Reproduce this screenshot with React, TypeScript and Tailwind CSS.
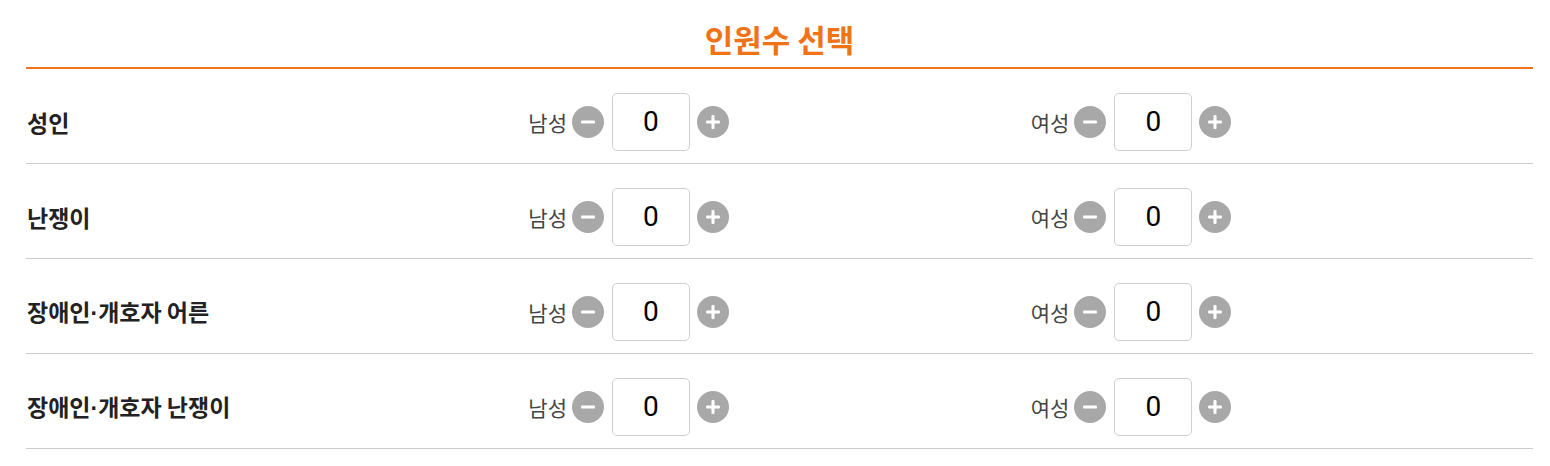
import React from "react";

const font = { fontFamily: '"Noto Sans CJK KR", "Noto Sans", sans-serif' };

function MinusIcon() {
  return (
    <svg width="32" height="32" viewBox="0 0 32 32" className="block">
      <circle cx="16" cy="16" r="16" fill="#a8a8a8" />
      <rect x="9" y="14.5" width="14" height="3" rx="1" fill="#ffffff" />
    </svg>
  );
}

function PlusIcon() {
  return (
    <svg width="32" height="32" viewBox="0 0 32 32" className="block">
      <circle cx="16" cy="16" r="16" fill="#a8a8a8" />
      <rect x="9" y="14.5" width="14" height="3" rx="1" fill="#ffffff" />
      <rect x="14.5" y="9" width="3" height="14" rx="1" fill="#ffffff" />
    </svg>
  );
}

function Counter({ label }: { label: string }) {
  return (
    <div className="flex items-center h-[58px]">
      <span className="text-[21px] text-[#444] leading-none">{label}</span>
      <button className="ml-[5px] w-[32px] h-[32px] p-0">
        <MinusIcon />
      </button>
      <div
        className="ml-[8px] w-[78px] h-[58px] border border-[#cfcfcf] rounded-[5px] bg-white flex items-center justify-center text-[28px] text-black"
        style={{ fontFamily: 'Roboto, "Liberation Sans", sans-serif' }}
      >
        0
      </div>
      <button className="ml-[7px] w-[32px] h-[32px] p-0">
        <PlusIcon />
      </button>
    </div>
  );
}

const rows: [string, string][] = [
  ["성인", ""],
  ["난쟁이", ""],
  ["장애인", "개호자 어른"],
  ["장애인", "개호자 난쟁이"],
];

export default function App() {
  return (
    <div className="bg-white w-[1550px] h-[466px]" style={font}>
      <div className="ml-[26px] w-[1507px]">
        <div className="h-[69px] border-b-2 border-[#f07320] flex items-center justify-center pt-[10px]">
          <h2 className="text-[31px] font-bold text-[#f07318] leading-none">인원수 선택</h2>
        </div>
        {rows.map(([a, b]) => (
          <div key={a + b} className="h-[95px] border-b border-[#cccccc] pt-[24px] grid grid-cols-3">
            <div className="flex items-center h-[58px] text-[23px] font-bold text-[#222] pl-[1px]">
              <span>
                {a}
                {b && (
                  <>
                    <span style={{ fontFamily: '"Liberation Sans", sans-serif' }}>·</span>
                    {b}
                  </>
                )}
              </span>
            </div>
            <Counter label="남성" />
            <Counter label="여성" />
          </div>
        ))}
      </div>
    </div>
  );
}
